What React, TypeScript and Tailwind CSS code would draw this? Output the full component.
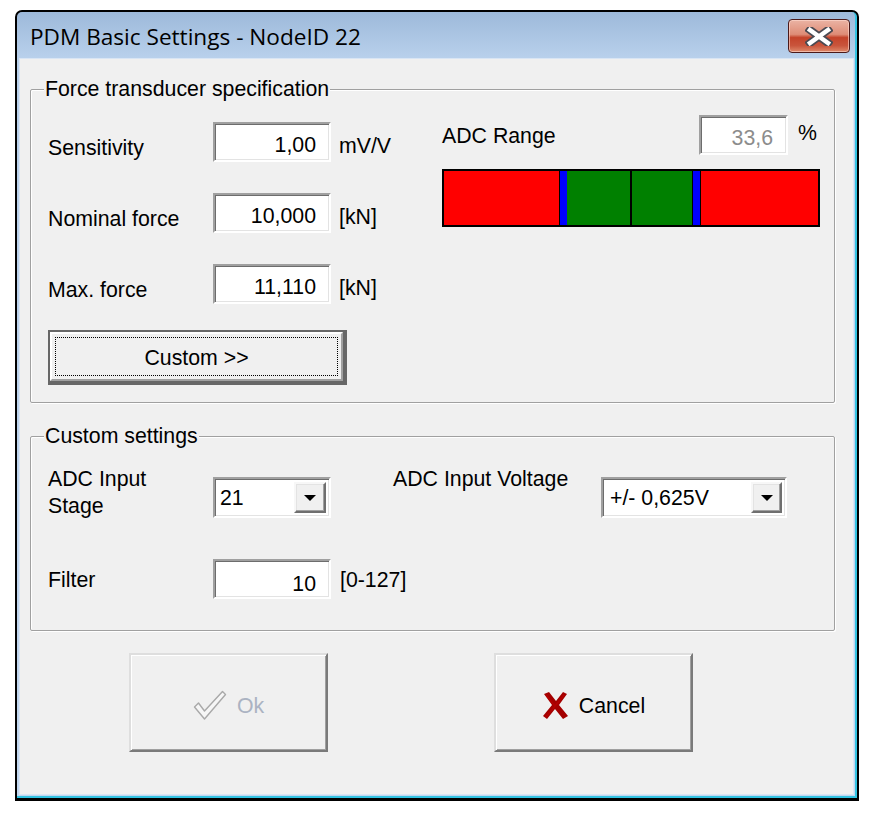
import React from "react";

const sunken =
  "border-2 border-t-[#a0a0a0] border-l-[#a0a0a0] border-b-white border-r-white shadow-[inset_1px_1px_0_#6d6d6d,inset_-1px_-1px_0_#e3e3e3]";

const raised =
  "border-2 border-t-[#f7f7f7] border-l-[#f7f7f7] border-b-[#6f6f6f] border-r-[#6f6f6f] shadow-[inset_-1px_-1px_0_#a0a0a0,inset_1px_1px_0_#e3e3e3]";

function EditBox({ value, className = "", muted = false }: { value: string; className?: string; muted?: boolean }) {
  return (
    <div className={`flex h-[40px] items-center justify-end bg-white pr-[13px] pt-[5px] ${sunken} ${className}`}>
      <span className={`leading-[24px] ${muted ? "text-[#8c8c8c]" : "text-black"}`}>{value}</span>
    </div>
  );
}

function Combo({ value, className = "", textPad = "pl-[5px]", btnWidth = "w-[32px]" }: { value: string; className?: string; textPad?: string; btnWidth?: string }) {
  return (
    <div className={`flex h-[41px] bg-white ${sunken} ${className}`}>
      <span className={`flex-1 pt-[7px] leading-[24px] ${textPad}`}>{value}</span>
      <div className={`my-[3px] mr-[3px] flex items-center justify-center bg-[#f0f0f0] ${raised} ${btnWidth}`}>
        <div className="h-0 w-0 border-x-[6px] border-t-[6px] border-x-transparent border-t-black" />
      </div>
    </div>
  );
}

function Row({ label, value, unit, last = false }: { label: string; value: string; unit: string; last?: boolean }) {
  return (
    <div className={`flex items-start ${last ? "" : "mb-[31px]"}`}>
      <span className="mt-[14px] w-[165px] leading-[24px]">{label}</span>
      <EditBox value={value} className="w-[118px]" />
      <span className="ml-[8px] mt-[12px] leading-[24px]">{unit}</span>
    </div>
  );
}

function RangeBar() {
  return (
    <div className="flex h-[58px] w-[378px] border-2 border-black">
      <div className="w-[115px] bg-[#ff0000]" />
      <div className="w-[1px] bg-black" />
      <div className="w-[7px] bg-[#0000ff]" />
      <div className="w-[63px] bg-[#008000]" />
      <div className="w-[2px] bg-black" />
      <div className="w-[60px] bg-[#008000]" />
      <div className="w-[1px] bg-black" />
      <div className="w-[7px] bg-[#0000ff]" />
      <div className="w-[1px] bg-black" />
      <div className="flex-1 bg-[#ff0000]" />
    </div>
  );
}

function CloseGlyph() {
  return (
    <svg width="28" height="19" viewBox="0 0 28 19">
      <path d="M5 3 L23 16 M23 3 L5 16" stroke="#4a4a52" strokeWidth="8" strokeLinecap="square" />
      <path d="M5 3 L23 16 M23 3 L5 16" stroke="#ffffff" strokeWidth="4.5" strokeLinecap="square" />
    </svg>
  );
}

function CheckIcon() {
  return (
    <svg width="34" height="31" viewBox="0 0 34 31">
      <path
        d="M1.5 17 L5.5 13 L11.5 21 L29.5 1.5 L32.5 4.5 L11.5 29 Z"
        fill="#f6f6f6"
        stroke="#a9a9a9"
        strokeWidth="1.4"
        strokeLinejoin="round"
      />
    </svg>
  );
}

function CrossIcon() {
  return (
    <svg width="27" height="29" viewBox="0 0 27 29">
      <path d="M2 3 L7 1 L14 10 L21 1 L25 3 L17 14 L26 25 L21 28 L13 18 L5 28 L1 25 L10 14 Z" fill="#a40000" />
      <path d="M4 4 L13 15 M22 4 L4 26" stroke="#c00000" strokeWidth="1.5" opacity="0.6" />
    </svg>
  );
}

function DialogButton({ children }: { children: React.ReactNode }) {
  return (
    <div
      className={`flex h-[99px] w-[199px] items-center justify-center gap-[10px] border-2 border-t-[#dedede] border-l-[#dedede] border-b-[#7a7a7a] border-r-[#7a7a7a] bg-[#f0f0f0] pt-[6px] shadow-[inset_1px_1px_0_#fff,inset_-1px_-1px_0_#a0a0a0]`}
    >
      {children}
    </div>
  );
}

export default function App() {
  return (
    <div className="h-[813px] w-[870px] bg-white pl-[15px] pt-[10px] font-['Liberation_Sans',Arial,sans-serif] text-[21.3px] text-black">
      <div className="h-[791px] w-[844px] rounded-t-[7px] border-2 border-b-[3px] border-black bg-[#1d1d1d]">
        <div className="flex h-full flex-col rounded-t-[5px] border-b-2 border-r-2 border-[#33c3e2] bg-[linear-gradient(to_bottom,#9db9da,#b9d1ec_47px,#c2d7ef)]">
          {/* title bar */}
          <div className="flex h-[47px] items-start justify-between">
            <span className="ml-[13px] mt-[10px] font-['Open_Sans',sans-serif] text-[22.6px] leading-[30px]">
              PDM Basic Settings - NodeID 22
            </span>
            <div className="mr-[5px] mt-[7px] flex h-[34px] w-[62px] items-center justify-center rounded-[4px] border border-[#4b1a1a] bg-[linear-gradient(to_bottom,#eab3a4,#de8c76_45%,#c4432a_55%,#c9553c_80%,#de8a6c)] shadow-[inset_0_0_0_1px_rgba(255,220,210,0.6)]">
              <CloseGlyph />
            </div>
          </div>

          {/* client area */}
          <div className="ml-[3px] flex h-[735px] w-[833px] flex-col bg-[#f0f0f0] pl-[10px] pr-[18px] shadow-[0_0_0_1px_#d9e5f4]">
            <fieldset className="mt-[18px] rounded-[2px] border border-[#a0a0a0] pb-[17px] pl-[17px] pt-[14px] shadow-[inset_1px_1px_0_#fff,1px_1px_0_#fff]">
              <legend className="-ml-[4px] bg-[#f0f0f0] px-px leading-[24px]">Force transducer specification</legend>
              <div className="flex items-start">
                <div className="mt-[7px] w-[394px]">
                  <Row label="Sensitivity" value="1,00" unit="mV/V" />
                  <Row label="Nominal force" value="10,000" unit="[kN]" />
                  <Row label="Max. force" value="11,110" unit="[kN]" last />
                  <div className="mt-[26px] h-[55px] w-[299px] border-2 border-[#676767] border-b-[4px] border-r-[4px]">
                    <div className="flex h-full w-full items-center justify-center border-2 border-t-white border-l-white border-b-[#a0a0a0] border-r-[#a0a0a0] p-[3px]">
                      <div className="flex h-full w-full items-center justify-center border border-dotted border-black pt-[2px]">
                        <span className="leading-[24px]">Custom &gt;&gt;</span>
                      </div>
                    </div>
                  </div>
                </div>
                <div className="w-[378px]">
                  <div className="flex items-start">
                    <span className="mt-[9px] flex-1 leading-[24px]">ADC Range</span>
                    <EditBox value="33,6" muted className="w-[89px]" />
                    <span className="ml-[10px] mr-[3px] mt-[6px] leading-[24px]">%</span>
                  </div>
                  <div className="mt-[14px]">
                    <RangeBar />
                  </div>
                </div>
              </div>
            </fieldset>

            <fieldset className="mt-[21px] rounded-[2px] border border-[#a0a0a0] pb-[31px] pl-[17px] pt-[18px] shadow-[inset_1px_1px_0_#fff,1px_1px_0_#fff]">
              <legend className="-ml-[4px] bg-[#f0f0f0] px-px leading-[24px]">Custom settings</legend>
              <div className="flex items-start">
                <span className="w-[165px] leading-[27px]">
                  ADC Input
                  <br />
                  Stage
                </span>
                <Combo value="21" className="mt-[11px] w-[118px]" />
                <span className="ml-[62px] w-[208px] leading-[27px]">ADC Input Voltage</span>
                <Combo value="+/- 0,625V" className="mt-[11px] w-[186px]" textPad="pl-[7px]" btnWidth="w-[31px]" />
              </div>
              <div className="mt-[39px] flex items-start">
                <span className="mt-[9px] w-[165px] leading-[24px]">Filter</span>
                <EditBox value="10" className="w-[118px] pt-[9px]" />
                <span className="ml-[9px] mt-[9px] leading-[24px]">[0-127]</span>
              </div>
            </fieldset>

            <div className="mt-[22px] flex pl-[99px]">
              <DialogButton>
                <CheckIcon />
                <span className="leading-[24px] text-[#abb3c2]">Ok</span>
              </DialogButton>
              <div className="ml-[166px]">
                <DialogButton>
                  <CrossIcon />
                  <span className="leading-[24px]">Cancel</span>
                </DialogButton>
              </div>
            </div>
          </div>
        </div>
      </div>
    </div>
  );
}
